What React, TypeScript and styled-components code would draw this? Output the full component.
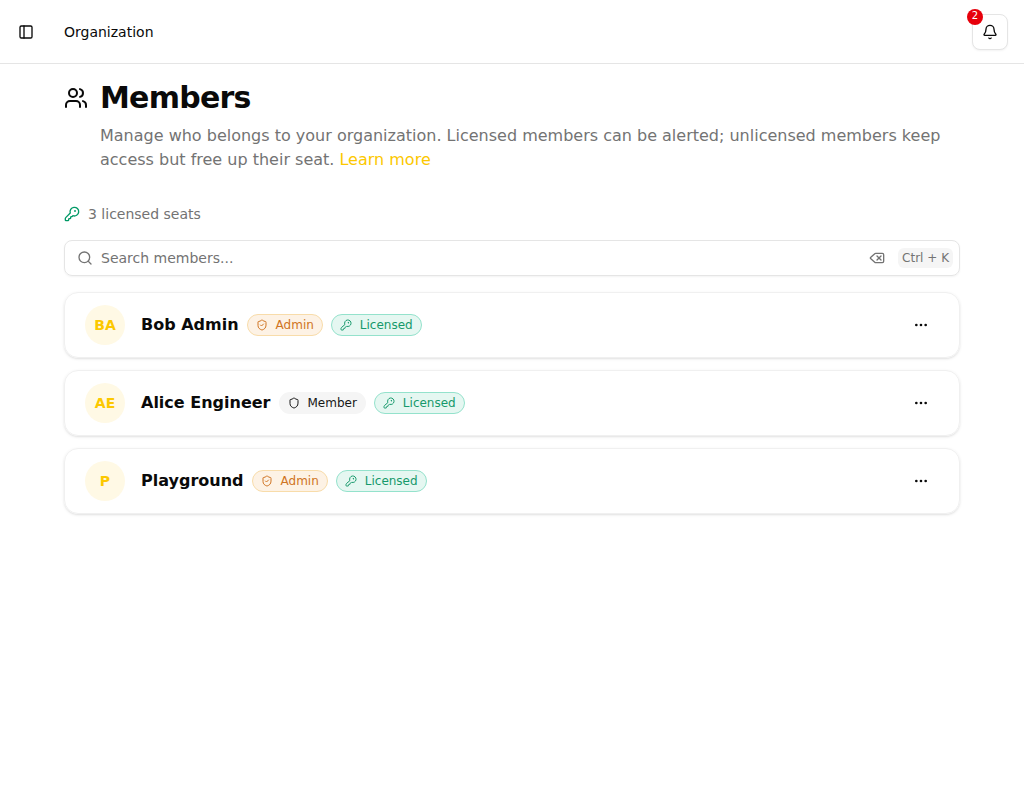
import React from "react";
import styled, { createGlobalStyle } from "styled-components";
import { PanelLeft, Bell, Users, KeyRound, Search, Delete, Shield, ShieldCheck, Ellipsis } from "lucide-react";

const GlobalStyle = createGlobalStyle`
  *, *::before, *::after { box-sizing: border-box; }
  body {
    margin: 0;
    background: #fff;
    color: #0a0a0a;
    font-family: "DejaVu Sans", sans-serif;
    font-size: 16px;
    line-height: 24px;
  }
  button, input { font: inherit; color: inherit; }
  svg { flex-shrink: 0; }
`;

const Header = styled.header`
  display: flex;
  align-items: center;
  height: 64px;
  padding: 0 16px;
  border-bottom: 1px solid #e5e5e5;
`;

const IconButton = styled.button<{ $size: number }>`
  display: flex;
  align-items: center;
  justify-content: center;
  width: ${(p) => p.$size}px;
  height: ${(p) => p.$size}px;
  padding: 0;
  border: 0;
  border-radius: 6px;
  background: transparent;
`;

const SidebarToggle = styled(IconButton)`
  margin-left: -4px;
`;

const Breadcrumb = styled.span`
  margin-left: 24px;
  font-size: 14px;
  line-height: 20px;
`;

const BellButton = styled(IconButton)`
  position: relative;
  margin-left: auto;
  border: 1px solid #e5e5e5;
  border-radius: 8px;
  background: #fff;
  box-shadow: 0 1px 2px rgba(0, 0, 0, 0.05);
`;

const Count = styled.span`
  position: absolute;
  top: -6px;
  left: -6px;
  width: 16px;
  height: 16px;
  border-radius: 50%;
  background: #e7000b;
  color: #fff;
  font-size: 10px;
  line-height: 13px;
  text-align: center;
`;

const Main = styled.main`
  padding: 16px 64px;
`;

const TitleRow = styled.div`
  display: flex;
  align-items: center;
  gap: 12px;
`;

const Title = styled.h1`
  margin: 0;
  font-size: 30px;
  line-height: 36px;
  font-weight: 700;
  letter-spacing: -0.75px;
`;

const Description = styled.p`
  margin: 8px 0 0 36px;
  color: #737373;
`;

const Link = styled.a`
  color: #fcc800;
`;

const Seats = styled.div`
  display: flex;
  align-items: center;
  gap: 8px;
  margin-top: 32px;
  color: #737373;
  font-size: 14px;
  line-height: 20px;
  svg { color: #009966; }
`;

const SearchBox = styled.label`
  display: flex;
  align-items: center;
  height: 36px;
  margin-top: 16px;
  padding: 0 6px 0 12px;
  border: 1px solid #e5e5e5;
  border-radius: 8px;
  color: #737373;
  box-shadow: 0 1px 2px rgba(0, 0, 0, 0.05);
`;

const SearchInput = styled.input`
  flex: 1;
  min-width: 0;
  padding: 0 8px;
  border: 0;
  outline: 0;
  background: transparent;
  font-size: 14px;
  line-height: 20px;
  &::placeholder { color: #737373; opacity: 1; }
`;

const Shortcut = styled.kbd`
  height: 20px;
  margin-left: 13px;
  padding: 0 4px;
  border-radius: 6px;
  background: #f5f5f5;
  font-family: inherit;
  font-size: 12px;
  line-height: 20px;
`;

const List = styled.div`
  display: flex;
  flex-direction: column;
  gap: 12px;
  margin-top: 16px;
`;

const Card = styled.article`
  display: flex;
  align-items: center;
  height: 66px;
  padding: 0 20px;
  border: 1px solid #f0f0f0;
  border-radius: 14px;
  box-shadow: 0 1px 3px rgba(0, 0, 0, 0.1), 0 1px 2px -1px rgba(0, 0, 0, 0.1);
`;

const Avatar = styled.span`
  display: flex;
  align-items: center;
  justify-content: center;
  width: 40px;
  height: 40px;
  margin-right: 16px;
  border-radius: 50%;
  background: #fff9e5;
  color: #fcc800;
  font-size: 14px;
  font-weight: 600;
`;

const Name = styled.span`
  font-weight: 600;
`;

const tones = {
  admin: "color: #d07423; background: #fdf2e5; border-color: #f8dcaa;",
  member: "color: #171717; background: #f5f5f5; border-color: transparent;",
  licensed: "color: #16996b; background: #e5f7f1; border-color: #94e2cc;",
};

const Badge = styled.span<{ $tone: keyof typeof tones }>`
  display: inline-flex;
  align-items: center;
  gap: 8px;
  height: 22px;
  margin-left: 8px;
  padding: 0 8px;
  border: 1px solid;
  border-radius: 11px;
  font-size: 12px;
  line-height: 16px;
  white-space: nowrap;
  ${(p) => tones[p.$tone]}
`;

const MoreButton = styled(IconButton)`
  margin-left: auto;
`;

const members = [
  { initials: "BA", name: "Bob Admin", admin: true },
  { initials: "AE", name: "Alice Engineer", admin: false },
  { initials: "P", name: "Playground", admin: true },
];

export default function App() {
  return (
    <>
      <GlobalStyle />
      <Header>
        <SidebarToggle $size={28} aria-label="Toggle sidebar"><PanelLeft size={16} /></SidebarToggle>
        <Breadcrumb>Organization</Breadcrumb>
        <BellButton $size={36} aria-label="Notifications">
          <Bell size={16} />
          <Count>2</Count>
        </BellButton>
      </Header>
      <Main>
        <TitleRow>
          <Users size={24} />
          <Title>Members</Title>
        </TitleRow>
        <Description>
          Manage who belongs to your organization. Licensed members can be alerted; unlicensed members keep access but
          free up their seat. <Link>Learn more</Link>
        </Description>
        <Seats><KeyRound size={16} />3 licensed seats</Seats>
        <SearchBox>
          <Search size={16} />
          <SearchInput placeholder="Search members..." />
          <Delete size={16} />
          <Shortcut>Ctrl + K</Shortcut>
        </SearchBox>
        <List>
          {members.map((m) => (
            <Card key={m.name}>
              <Avatar>{m.initials}</Avatar>
              <Name>{m.name}</Name>
              <Badge $tone={m.admin ? "admin" : "member"}>
                {m.admin ? <ShieldCheck size={12} /> : <Shield size={12} />}
                {m.admin ? "Admin" : "Member"}
              </Badge>
              <Badge $tone="licensed"><KeyRound size={12} />Licensed</Badge>
              <MoreButton $size={36} aria-label="More actions"><Ellipsis size={16} /></MoreButton>
            </Card>
          ))}
        </List>
      </Main>
    </>
  );
}
